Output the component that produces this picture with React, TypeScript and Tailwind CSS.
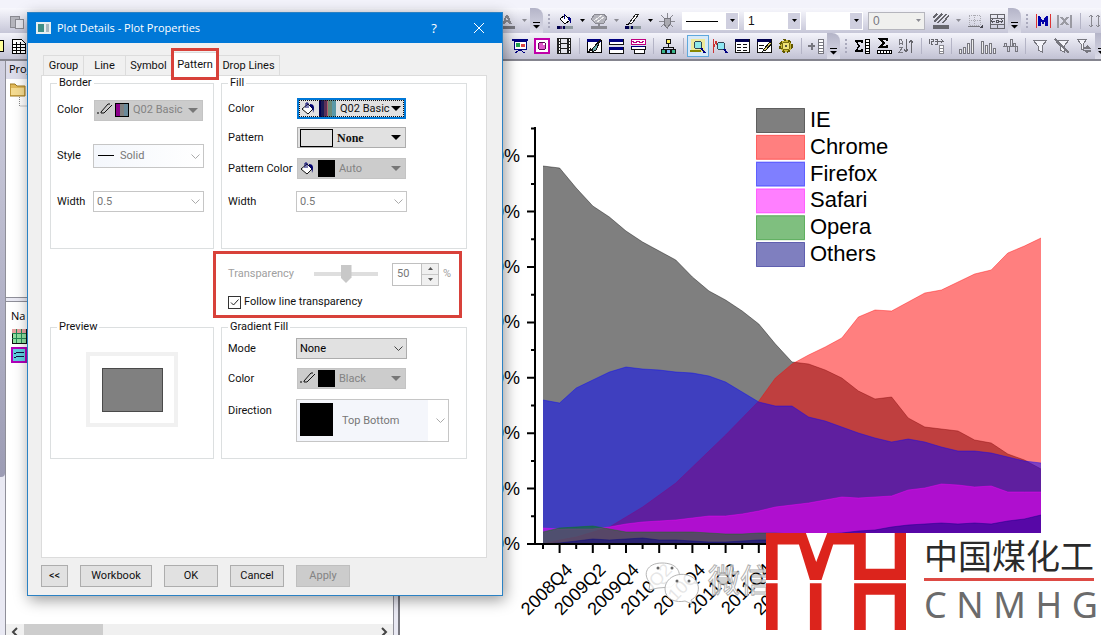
import React from 'react';
import clsx from 'clsx';

// ---------- toolbar icons (16x16) ----------

const funnel = <path d="M1 2h14l-5 6v6l-4-2V8z" fill="#f4f4fa" stroke="#77777f" />;

const ICONS: Record<string, React.ReactNode> = {
  fontColor: (
    <>
      <path d="M3 11L7 2h2l4 9h-3l-1-2H7l-1 2zM7 7h2L8 4z" fill="#8a8a92" />
      <path d="M0 13h16v3H0z" fill="#77777f" />
    </>
  ),
  bucket: (
    <>
      <path d="M3 6l5-4 5 5-5 4z" fill="#fff" stroke="#000" />
      <path d="M7 6V1" stroke="#00007f" />
      <path d="M11 4c3 0 4 2 3 7-1-2-1-4-3-5z" fill="#00007f" />
      <path d="M0 13h16v3H0z" fill="#8f9a9f" />
      <path d="M0 13h3v3H0zM6 13h2v3H6z" fill="#00004f" />
      <path d="M3 13h2v3H3z" fill="#553377" />
    </>
  ),
  shape: (
    <>
      <path d="M4 1h9l3 4-3 5H4L0 6z" fill="#b5b5bd" stroke="#8a8a92" />
      <path d="M3 8l8-6M6 9l7-5" stroke="#eee" />
      <path d="M7 10h2v3H7z" fill="#8a8a92" />
      <path d="M0 13h16v3H0z" fill="#8a8a92" />
    </>
  ),
  pencil: (
    <>
      <path d="M4 10l7-9h3l-7 9z" fill="#fff" stroke="#222" />
      <path d="M1 11h3" stroke="#000" />
      <path d="M0 13h16v3H0z" fill="#8f9a9f" />
      <path d="M0 13h4v3H0zM6 13h2v3H6z" fill="#00004f" />
    </>
  ),
  bulb: (
    <>
      <path d="M8 0v16M0 8h16M2 2l12 12M14 2L2 14" stroke="#8a8a92" />
      <path d="M5 5h6v6l-2 3H7l-2-3z" fill="#a9a9b0" stroke="#77777f" />
    </>
  ),
  hatch: (
    <>
      <path d="M0 5l4-4M1 9l8-8M5 10l8-9M10 10l6-8" stroke="#66666d" strokeWidth="1.5" />
      <path d="M0 12h16v4H0z" fill="#66666d" />
    </>
  ),
  borders: (
    <>
      <path d="M2 2h11v10H2zM7 2v10M2 7h11" fill="none" stroke="#aaaab2" strokeDasharray="1 1" />
      <path d="M1 13h12" stroke="#77777f" />
      <path d="M16 11v4h-4z" fill="#44444c" />
    </>
  ),
  merge: (
    <>
      <path d="M1 1h14v14H1zM1 5h14M1 11h14M8 1v4M8 11v4" fill="none" stroke="#66666d" />
      <path d="M2 8h4M10 8h4M4 6L2 8l2 2M12 6l2 2-2 2M7 7h2v2H7z" fill="none" stroke="#55555d" />
    </>
  ),
  mask: (
    <>
      <path d="M1 1v14M15 1v14" stroke="#d33" />
      <path d="M3 13V3h2l3 5 3-5h2v10h-3V8l-2 4-2-4v5z" fill="#0000a8" />
    </>
  ),
  unmask: <path d="M1 2v13M14 2v13M4 4l7 8M11 4l-7 8" stroke="#9a9aa2" strokeWidth="2" />,
  updown: <path d="M4 2v12M2 4l2-2 2 2M2 12l2 2 2-2M11 2v12M9 4l2-2 2 2M9 12l2 2 2-2" fill="none" stroke="#8a8a92" />,
  board: (
    <>
      <path d="M0 2h16" stroke="#00007f" strokeWidth="2" />
      <path d="M2 3h12v8H2z" fill="#fff" stroke="#00007f" />
      <circle cx="6" cy="7" r="2.5" fill="#1fa34a" />
      <path d="M9 6h4v3H9z" fill="#d44" />
      <path d="M8 11v2M3 15l5-3 5 3" fill="none" stroke="#00007f" />
    </>
  ),
  circleBox: (
    <>
      <path d="M1 1h14v14H1z" fill="#fff" stroke="#c000a8" strokeWidth="2" />
      <circle cx="8" cy="8" r="4" fill="#e05acb" stroke="#5f0055" />
      <circle cx="10" cy="6" r="1.5" fill="#fff" />
    </>
  ),
  film: (
    <>
      <path d="M1 0h14v16H1z" fill="#222" />
      <path d="M5 1h6v4H5zM5 6h6v4H5zM5 11h6v4H5z" fill="#e5e5ec" />
      <path d="M3 1v15M13 1v15" stroke="#fff" strokeDasharray="2 1" />
    </>
  ),
  brush: (
    <>
      <path d="M1 2h14v12H1z" fill="#fff" stroke="#000" />
      <path d="M1 1h14v3H1z" fill="#00007f" />
      <path d="M15 1l-8 9-1 4 4-2z" fill="#6aa" stroke="#111" />
      <path d="M2 14l6-2-4-2z" fill="#111" />
    </>
  ),
  panes: (
    <>
      <path d="M1 1h14v5H1zM1 9h14v6H1z" fill="#fff" stroke="#111" />
      <path d="M1 1h14v3H1zM1 9h14v3H1z" fill="#00007f" />
    </>
  ),
  panes2: (
    <>
      <path d="M1 1h14v5H1z" fill="#fff" stroke="#c0007f" />
      <path d="M2 3l3 2 3-2 3 2 3-2" fill="none" stroke="#c0007f" />
      <path d="M1 8h14v3H1zM4 11h10v4H4z" fill="#fff" stroke="#111" />
      <path d="M1 8h14v1H1z" fill="#00007f" />
    </>
  ),
  tree: (
    <>
      <path d="M8 5v4M3 12V9h10v3" fill="none" stroke="#111" />
      <path d="M6 1h4v4H6z" fill="#ffef5a" stroke="#111" />
      <path d="M1 11h4v4H1zM11 11h4v4h-4z" fill="#39b58a" stroke="#111" />
      <path d="M6 11h4v4H6z" fill="#7fc0ff" stroke="#111" />
    </>
  ),
  zoomImg: (
    <>
      <path d="M1 1h14v13H1z" fill="#eee99a" />
      <path d="M0 13h11" stroke="#888800" strokeWidth="2" />
      <circle cx="8" cy="7" r="4" fill="#8fe8e8" stroke="#345" />
      <path d="M11 10l4 5" stroke="#00007f" strokeWidth="2" />
    </>
  ),
  zoomGraph: (
    <>
      <path d="M1 1v14M1 12l3-9 2 8 2-7" fill="none" stroke="#c33" />
      <circle cx="9" cy="8" r="4" fill="#8fe8f4" stroke="#345" />
      <path d="M12 11l3 4" stroke="#00007f" strokeWidth="2" />
    </>
  ),
  sheet: (
    <>
      <path d="M1 1h14v13H1z" fill="#fff" stroke="#111" />
      <path d="M1 1h14v3H1z" fill="#00004f" />
      <path d="M3 6h4M9 6h4M3 9h4M9 9h4M3 12h4M9 12h4" stroke="#111" />
    </>
  ),
  note: (
    <>
      <path d="M1 1h14v13H1z" fill="#fff" stroke="#111" />
      <path d="M1 1h14v3H1z" fill="#00004f" />
      <path d="M3 7h5M3 10h4" stroke="#111" />
      <path d="M14 4l-6 7-1 2 3-1 6-7z" fill="#e0d060" stroke="#111" />
    </>
  ),
  gear: (
    <>
      <circle cx="8" cy="8" r="6" fill="#c9b93c" stroke="#5f5500" strokeWidth="2" strokeDasharray="3 2" />
      <circle cx="8" cy="8" r="4" fill="#efe27a" stroke="#7a6d10" />
      <circle cx="8" cy="8" r="1.5" fill="#554" />
    </>
  ),
  addCol: (
    <>
      <path d="M0 8h7M4 5v7" stroke="#77777f" strokeWidth="2" />
      <path d="M10 1h5v14h-5zM10 4h5M10 7h5M10 10h5M10 13h5" fill="#fff" stroke="#77777f" />
    </>
  ),
  sumCol: (
    <>
      <path d="M8 5V3H2l3 5-3 5h6v-2" fill="none" stroke="#000" strokeWidth="1.5" />
      <path d="M11 1h4v14h-4zM11 4h4M11 7h4M11 10h4M11 13h4" fill="#fff" stroke="#000" />
    </>
  ),
  sumRow: (
    <>
      <path d="M11 3V1H4l4 4-4 4h7V7" fill="none" stroke="#000" strokeWidth="1.5" />
      <path d="M1 12h14v3H1zM4 12v3M7 12v3M10 12v3M13 12v3" fill="#fff" stroke="#000" />
    </>
  ),
  sort: (
    <>
      <path d="M1 7V3l1-2h1l1 2v4M1 5h3M1 9h4l-4 5h4" fill="none" stroke="#77777f" />
      <path d="M8 1v13M6 11l2 3 2-3M13 15V2M11 5l2-3 2 3" fill="none" stroke="#66666d" />
    </>
  ),
  numbers: (
    <>
      <path d="M1 1v5M3 1h2v2H3v3h2M7 1h2v5H7M7 3h2M10 3h5l-2-2M13 5l2-2" fill="none" stroke="#66666d" />
      <path d="M11 7h4v8h-4zM11 10h4M11 13h4" fill="#fff" stroke="#88888f" />
    </>
  ),
  bars: <path d="M1 15v-4h2v4zM5 15V9h2v6zM9 15V5h2v10zM13 15V1h2v14z" fill="#eee" stroke="#77777f" />,
  bars2: <path d="M1 15V3h2v12zM5 15V7h2v8zM9 15V5h2v10zM13 15v-5h2v5z" fill="#eee" stroke="#77777f" />,
  hist: <path d="M1 8h14M2 8V5h2v3M5 8v5h2V8M8 8V1h2v7M11 8V5h2v8h2V8" fill="none" stroke="#77777f" />,
  filter: funnel,
  filterOff: (
    <>
      {funnel}
      <path d="M1 1l14 14" stroke="#77777f" strokeWidth="2" />
    </>
  ),
  filterRedo: (
    <>
      <path d="M1 1h10l-4 5v6l-2-1V6z" fill="#f4f4fa" stroke="#77777f" />
      <path d="M8 10h5l-2-2M15 13h-5l2 2" fill="none" stroke="#77777f" strokeWidth="2" />
    </>
  ),
  paste: (
    <>
      <path d="M2 3h9v11H2z" fill="#b5b5bd" stroke="#8a8a92" />
      <path d="M7 6h8v9H7z" fill="#e5e5ec" stroke="#8a8a92" />
    </>
  ),
  grid: (
    <>
      <path d="M2 1h9l4 4v10H2z" fill="#fff" stroke="#000" />
      <path d="M2 6h13M2 9h13M2 12h13M6 4v11M10 4v11" stroke="#000" />
    </>
  ),
};

const Icon = ({ name }: { name: string }) => (
  <svg width="16" height="16" viewBox="0 0 16 16" shapeRendering="crispEdges" aria-hidden="true">
    {ICONS[name]}
  </svg>
);

const ToolButton = ({ name, active }: { name: string; active?: boolean }) => (
  <button
    aria-label={name}
    className={clsx(
      'flex h-[22px] w-[22px] shrink-0 items-center justify-center',
      active && 'border border-[#5fa8dc] bg-[#d6e9f8]'
    )}
  >
    <Icon name={name} />
  </button>
);

const Caret = ({ dim }: { dim?: boolean }) => (
  <button aria-label="More" className="flex w-3 shrink-0 items-center justify-center">
    <svg width="5" height="3" viewBox="0 0 5 3">
      <path d="M0 0h5L2.5 3z" fill={dim ? '#8a8a92' : '#000'} />
    </svg>
  </button>
);

const Sep = () => (
  <span className="flex w-2 shrink-0 justify-center">
    <span className="h-4 w-px bg-[#b4b4c6]" />
  </span>
);

// end of one toolbar and the grip of the next
const Fold = () => (
  <>
    <span className="flex w-[13px] shrink-0 items-end justify-center self-stretch rounded-tr-lg bg-linear-to-b from-[#b4b4c8] to-[#dcdce8] pb-1">
      <svg width="7" height="7" viewBox="0 0 7 7">
        <path d="M0 0h7v1H0zM0 3h7L3.5 6.5z" fill="#000" />
      </svg>
    </span>
    <span className="flex w-[11px] shrink-0 flex-col items-center gap-0.5">
      {[0, 1, 2, 3].map((i) => (
        <span key={i} className="size-0.5 bg-[#a9a9bc]" />
      ))}
    </span>
  </>
);

const ToolSelect = ({ value, dim, line }: { value: string; dim?: boolean; line?: boolean }) => (
  <span className="relative mr-[5px] block w-[57px] shrink-0">
    <select
      aria-label="Line option"
      disabled={dim}
      className={clsx(
        'block h-[18px] w-full appearance-none pl-1 font-[Liberation_Sans] text-xs leading-4',
        dim ? 'border border-[#b5b5bd] bg-[#f0f0ee] text-[#77777f]' : 'bg-white text-[#111]'
      )}
    >
      <option>{value}</option>
    </select>
    {line && <span className="absolute top-[9px] left-1 h-px w-8 bg-black" />}
    <span
      className={clsx(
        'pointer-events-none absolute top-px right-px flex h-4 w-3 items-center justify-center',
        !dim && 'bg-[#cfcfdf]'
      )}
    >
      <svg width="5" height="3" viewBox="0 0 5 3">
        <path d="M0 0h5L2.5 3z" fill={dim ? '#8a8a92' : '#000'} />
      </svg>
    </span>
  </span>
);

const Toolbars = () => (
  <header className="overflow-hidden border-b-2 border-[#85858f] bg-[#d5d5e4]">
    <div className="h-2 bg-[#f3f3fb]" />
    <div className="flex h-[25px] items-center bg-linear-to-b from-[#f8f8fd] to-[#c6c6d8]">
      <div className="flex w-[496px] shrink-0 gap-1 pl-2">
        <Icon name="paste" />
      </div>
      <ToolButton name="fontColor" />
      <Caret dim />
      <Fold />
      <ToolButton name="bucket" />
      <Caret />
      <ToolButton name="shape" />
      <Caret dim />
      <ToolButton name="pencil" />
      <Caret />
      <ToolButton name="bulb" />
      <span className="w-1 shrink-0" />
      <ToolSelect value="" line />
      <ToolSelect value="1" />
      <ToolSelect value="" />
      <ToolSelect value="0" dim />
      <ToolButton name="hatch" />
      <Caret dim />
      <ToolButton name="borders" />
      <ToolButton name="merge" />
      <Fold />
      <ToolButton name="mask" />
      <ToolButton name="unmask" />
      <Sep />
      <ToolButton name="updown" />
    </div>
    <div className="flex h-[26px] items-center bg-linear-to-b from-[#f4f4fb] to-[#c2c2d4]">
      <div className="flex w-[509px] shrink-0 items-center gap-1.5">
        <span className="h-3 w-1 border border-l-0 border-black bg-[#ffff9a]" />
        <Icon name="grid" />
      </div>
      <ToolButton name="board" />
      <ToolButton name="circleBox" />
      <ToolButton name="film" />
      <Sep />
      <ToolButton name="brush" />
      <ToolButton name="panes" />
      <ToolButton name="panes2" />
      <Sep />
      <ToolButton name="tree" />
      <Sep />
      <ToolButton name="zoomImg" active />
      <ToolButton name="zoomGraph" />
      <ToolButton name="sheet" />
      <ToolButton name="note" />
      <ToolButton name="gear" />
      <Sep />
      <ToolButton name="addCol" />
      <Fold />
      <ToolButton name="sumCol" />
      <ToolButton name="sumRow" />
      <ToolButton name="sort" />
      <Sep />
      <ToolButton name="numbers" />
      <Sep />
      <ToolButton name="bars" />
      <ToolButton name="bars2" />
      <ToolButton name="hist" />
      <Sep />
      <ToolButton name="filter" />
      <ToolButton name="filterOff" />
      <ToolButton name="filterRedo" />
      <Fold />
    </div>
  </header>
);

// ---------- project explorer ----------

const Explorer = () => (
  <aside className="flex w-[400px] shrink-0 border-r-2 border-[#77777f] bg-[#e9e9f3] text-xs">
    <div className="flex w-[5px] shrink-0 flex-col">
      <div className="h-[416px] rounded-br bg-linear-to-b from-[#d0d0e0] to-[#9c9cb4]" />
    </div>
    <div className="flex min-w-0 flex-1 flex-col border-x border-[#8f8f99] bg-white">
      <h2 className="h-[18px] bg-[#dcdcea] pl-[3px] font-[Open_Sans] text-[11px] leading-4">Pro_</h2>
      <div className="h-[219px] border-b border-[#8f8f99] pt-0.5 pl-1">
        <svg width="18" height="28" viewBox="0 0 18 28">
          <path d="M0 3h5l2 2h8v10H0z" fill="#e0b95a" stroke="#a07a20" />
          <path d="M1 7h13v7H1z" fill="#f5dc92" />
          <path d="M9.5 16v9H18" fill="none" stroke="#888" strokeDasharray="1 1" />
        </svg>
      </div>
      <div className="h-1 border-b border-[#8f8f99] bg-[#e9e9f3]" />
      <div className="flex-1 pt-1.5 pl-[5px]">
        <span className="block font-[Open_Sans] text-[11px] leading-4">Na</span>
        <svg width="16" height="38" viewBox="0 0 16 38" shapeRendering="crispEdges" className="mt-1">
          <path d="M1 1h14v14H1z" fill="#8fe0a0" stroke="#111" />
          <path d="M1 1h14v4H1z" fill="#e8a0a0" />
          <path d="M1 5h14M1 10h14M5 1v14M10 1v14" stroke="#285" />
          <path d="M1 20h14v14H1z" fill="#5fd0e0" stroke="#b000b8" strokeWidth="2" />
          <path d="M3 26l4-2 6 1M3 30l4-2 6 1" fill="none" stroke="#114" />
        </svg>
      </div>
      <div className="flex h-[11px] items-center overflow-hidden bg-[#f0f0f0]">
        <svg width="18" height="11" viewBox="0 0 18 11">
          <path d="M11 4L7 8l4 4" fill="none" stroke="#444" strokeWidth="2" />
        </svg>
        <span className="h-full w-[79px] bg-[#cdcdcd]" />
        <svg width="16" height="11" viewBox="0 0 16 11" className="ml-auto">
          <path d="M5 4l4 4-4 4" fill="none" stroke="#444" strokeWidth="2" />
        </svg>
      </div>
    </div>
    <div className="w-1 shrink-0" />
  </aside>
);

// ---------- graph ----------

const X0 = 543;
const STEP = 16.6;
const BASE = 544;

const SERIES = [
  {
    name: 'IE', color: '#000000',
    y: [166, 168, 188, 206, 217, 231, 242, 251, 260, 277, 291, 300, 311, 324, 344, 362, 364, 370, 378, 391, 399, 397, 418, 427, 429, 431, 440, 443, 454, 460, 469],
  },
  {
    name: 'Chrome', color: '#ff0000',
    y: [544, 540, 537, 532, 527, 517, 507, 495, 483, 467, 451, 435, 418, 401, 378, 364, 355, 347, 338, 317, 310, 311, 302, 293, 290, 282, 274, 270, 253, 246, 238],
  },
  {
    name: 'Firefox', color: '#0000ff',
    y: [400, 403, 388, 380, 372, 367, 369, 370, 372, 373, 376, 382, 392, 402, 406, 406, 417, 421, 427, 433, 438, 442, 439, 442, 447, 451, 451, 453, 457, 461, 463],
  },
  {
    name: 'Safari', color: '#ff00ff',
    y: [528, 529, 529, 529, 527, 524, 522, 521, 520, 518, 516, 516, 514, 511, 507, 505, 503, 500, 497, 498, 497, 496, 490, 488, 484, 485, 487, 486, 492, 492, 492],
  },
  {
    name: 'Opera', color: '#008000',
    y: [532, 528, 527, 526, 529, 532, 532, 532, 532, 532, 533, 534, 534, 533, 533, 534, 535, 535, 536, 536, 536, 536, 536, 536, 536, 537, 537, 537, 537, 537, 537],
  },
  {
    name: 'Others', color: '#000080',
    y: [544, 543, 541, 539, 540, 539, 538, 540, 540, 541, 542, 542, 541, 540, 540, 538, 536, 534, 533, 531, 530, 527, 525, 524, 523, 524, 523, 524, 521, 519, 515],
  },
];

const QUARTERS = ['2008Q4', '2009Q2', '2009Q4', '2010Q2', '2010Q4', '2011Q2', '2011Q4', '2012Q2'];

const linePoints = (ys: number[]) => ys.map((y, i) => `${(X0 + i * STEP).toFixed(1)},${y}`).join(' ');

const Graph = () => (
  <main className="min-w-0 flex-1 overflow-hidden bg-white">
    <svg width="701" height="574" viewBox="400 61 701 574" fontFamily="Liberation Sans, sans-serif">
      {SERIES.map((s) => (
        <g key={s.name}>
          <polygon
            points={`${X0},${BASE} ${linePoints(s.y)} ${X0 + 30 * STEP},${BASE}`}
            fill={s.color}
            fillOpacity="0.5"
          />
          <polyline points={linePoints(s.y)} fill="none" stroke={s.color} strokeOpacity="0.4" />
        </g>
      ))}

      <path d={`M535 127V545M534 ${BASE}H1041`} stroke="#000" strokeWidth="2" fill="none" />
      {[0, 1, 2, 3, 4, 5, 6, 7].map((i) => {
        const y = BASE - i * 55.4;
        return (
          <g key={i}>
            <path d={`M527 ${y}h8M531 ${y - 27.7}h4`} stroke="#000" strokeWidth="2" />
            <text x="520" y={y + 6} fontSize="18" textAnchor="end">{i * 10}%</text>
          </g>
        );
      })}
      {QUARTERS.map((q, i) => {
        const x = X0 + STEP + i * STEP * 2;
        return (
          <g key={q}>
            <path d={`M${x - STEP} 544v5M${x} 544v9`} stroke="#000" strokeWidth="2" />
            <text fontSize="18" textAnchor="end" transform={`translate(${x + 14} 571) rotate(-45)`}>{q}</text>
          </g>
        );
      })}

      {SERIES.map((s, i) => (
        <g key={s.name}>
          <rect
            x="756.5"
            y={108.5 + i * 26.8}
            width="48"
            height="24"
            fill={s.color}
            fillOpacity="0.5"
            stroke={s.color}
            strokeOpacity="0.5"
          />
          <text x="810" y={127 + i * 26.8} fontSize="22">{s.name}</text>
        </g>
      ))}

      {/* wechat mark */}
      <g stroke="#b5b5b5" fill="#fff" fillOpacity="0.9">
        <path d="M649 590l1-7c-8-9-3-20 12-20 14 0 19 8 17 16l-8 8-13 1z" />
        <path d="M691 600c10-5 10-19-1-24-12-5-25 2-25 13s12 14 20 12l7 3z" />
      </g>
      <g fill="#666">
        <circle cx="658" cy="568" r="1.5" />
        <circle cx="672" cy="568" r="1.5" />
        <circle cx="677" cy="581" r="1.5" />
        <circle cx="689" cy="581" r="1.5" />
      </g>
      <text
        x="708"
        y="592"
        fontSize="32"
        fontFamily="Noto Sans CJK SC, sans-serif"
        fill="#fff"
        fillOpacity="0.7"
        stroke="#b0b0b0"
      >
        微信
      </text>
    </svg>
  </main>
);

const Brand = () => (
  <div className="absolute right-0 bottom-0 flex h-[102px] w-[335px] gap-[18px] bg-white">
    <svg width="140" height="97" viewBox="48 158 421 291" className="shrink-0" aria-label="YH">
      <path
        fill="#dc241c"
        d="M48 158H168L199 245L232 158H348V265H435V158H469V299H313V192H250L215 299H180L147 192H83V299H48zM48 309H83V449H48zM180 309H215V449H180zM313 309H469V449H435V343H348V449H313z"
      />
    </svg>
    <div className="flex w-[174px] flex-col">
      <span className="pt-1 font-[Noto_Sans_CJK_SC] text-[34px] leading-9 whitespace-nowrap text-[#2b2b2b]">
        中国煤化工
      </span>
      <span className="mt-[5px] h-[3px] w-[170px] bg-[#dd4a44]" />
      <span className="mt-1.5 flex justify-between font-[Noto_Sans] text-[36px] leading-9 text-[#6b6b6b]">
        {['C', 'N', 'M', 'H', 'G'].map((c) => (
          <span key={c}>{c}</span>
        ))}
      </span>
    </div>
  </div>
);

// ---------- dialog ----------

const Group = ({ title, className, children }: { title: string; className?: string; children: React.ReactNode }) => (
  <fieldset className={clsx('min-w-0 border border-[#dcdfe0] px-1.5', className)}>
    <legend className="h-3.5 px-0.5 leading-3.5">{title}</legend>
    {children}
  </fieldset>
);

interface ComboProps {
  id: string;
  value: string;
  disabled?: boolean;
  className?: string;
  preview?: React.ReactNode;
}

const Combo = ({ id, value, disabled, className, preview }: ComboProps) => (
  <span className="relative block shrink-0">
    <select
      id={id}
      disabled={disabled}
      className={clsx(
        'block appearance-none border',
        disabled ? 'border-[#c6c6c6] bg-white text-[#777]' : 'border-[#adadad] bg-[#e1e1e1] text-black',
        className ?? 'h-[21px] w-[111px] pl-[3px]'
      )}
    >
      <option>{value}</option>
    </select>
    {preview}
    <svg
      width="9"
      height="5"
      viewBox="0 0 9 5"
      className="pointer-events-none absolute inset-y-0 right-1 my-auto"
    >
      <path d="M0.5 0.5l4 4 4-4" fill="none" stroke={disabled ? '#aaa' : '#444'} />
    </svg>
  </span>
);

interface ColorButtonProps {
  id: string;
  icon?: 'line' | 'fill';
  swatch: string;
  value: string;
  disabled?: boolean;
  focused?: boolean;
  serif?: boolean;
}

const ColorButton = ({ id, icon, swatch, value, disabled, focused, serif }: ColorButtonProps) => (
  <button
    id={id}
    disabled={disabled}
    className={clsx(
      'ml-px flex h-[21px] w-[109px] shrink-0 items-center pl-0.5',
      disabled && 'border border-[#c4c4c4] bg-[#ccc] pr-1 text-[#838383]',
      !disabled && !focused && 'border border-[#adadad] bg-[#e1e1e1] pr-1',
      focused && 'border-2 border-[#0078d7] bg-[#e1e1e1] pr-[3px] outline-1 -outline-offset-3 outline-dotted'
    )}
  >
    {icon === 'line' && (
      <svg width="18" height="14" viewBox="0 0 18 14" className="shrink-0">
        <path d="M4 9l7-8M7 10l8-8M4 9v1h3M11 1h2" fill="none" stroke="#111" />
        <path d="M0 10h2" stroke="#000" />
      </svg>
    )}
    {icon === 'fill' && (
      <svg width="18" height="14" viewBox="0 0 18 14" className="shrink-0">
        <path d="M1 7l6-5 5 5-5 5z" fill="#fff" stroke="#111" />
        <path d="M5 6V1h2v5" fill="none" stroke="#00006f" />
        <path d="M9 2c4 0 5 3 3 9 0-4-1-6-3-7z" fill="#00006f" />
      </svg>
    )}
    <span className={clsx('shrink-0', swatch)} />
    <span className={clsx('ml-1 whitespace-nowrap', serif && 'font-[Liberation_Serif] text-xs font-bold')}>
      {value}
    </span>
    <svg width="10" height="5" viewBox="0 0 10 5" className="ml-auto shrink-0">
      <path d="M0 0h10L5 5z" fill={disabled ? '#777' : '#000'} />
    </svg>
  </button>
);

const STRIPES =
  'h-[17px] w-[17px] bg-[linear-gradient(90deg,#1a1a55_0_20%,#5a3058_20%_40%,#b0606a_40%_50%,#6a8a78_50%_75%,#5a98a8_75%)] border-l-2 border-[#00004f]';
const STRIPES_DIM =
  'h-[14px] w-[14px] bg-[linear-gradient(90deg,#8a008a_0_33%,#808080_33%_66%,#6a8a9a_66%)] border border-black';
const BLACK = 'h-[17px] w-[17px] bg-black';

interface RowProps {
  label: string;
  id: string;
  wide?: boolean;
  className?: string;
  children: React.ReactNode;
}

const Row = ({ label, id, wide, className, children }: RowProps) => (
  <div className={clsx('flex', className ?? 'items-center')}>
    <label htmlFor={id} className={clsx('shrink-0 whitespace-nowrap', wide ? 'w-[68px]' : 'w-9')}>
      {label}
    </label>
    {children}
  </div>
);

const TABS = [
  { name: 'Group', width: 'w-[41px]' },
  { name: 'Line', width: 'w-[42px]' },
  { name: 'Symbol', width: 'w-[46px]' },
  { name: 'Pattern', width: 'w-[46px]' },
  { name: 'Drop Lines', width: 'w-[62px]' },
];

interface DialogButtonProps {
  children: React.ReactNode;
  className: string;
  disabled?: boolean;
}

const DialogButton = ({ children, className, disabled }: DialogButtonProps) => (
  <button
    disabled={disabled}
    className={clsx(
      'h-[22px] border text-center',
      disabled ? 'border-[#bfbfbf] bg-[#ccc] text-[#838383]' : 'border-[#adadad] bg-[#e1e1e1]',
      className
    )}
  >
    {children}
  </button>
);

const PlotDetails = () => (
  <section
    role="dialog"
    aria-label="Plot Details"
    className="absolute top-3 left-[27px] flex h-[584px] w-[476px] flex-col border border-[#2b82c4] bg-[#f0f0f0] font-[Roboto,sans-serif] text-[11px] leading-4 text-[#111] shadow-[2px_4px_14px_rgba(0,0,0,0.4)]"
  >
    <header className="flex h-[30px] shrink-0 items-center bg-[#0078d7] pl-2 text-white">
      <svg width="15" height="12" viewBox="0 0 15 12">
        <path d="M0 0h15v12H0z" fill="#e8eef0" />
        <path d="M2 2h6v8H2z" fill="#3f8f86" />
        <path d="M10 2h3v8h-3z" fill="#a8b8c0" />
      </svg>
      <h1 className="ml-1.5 font-[Open_Sans] text-[11px]">Plot Details - Plot Properties</h1>
      <button aria-label="Help" className="ml-auto w-11 font-[Open_Sans] text-[13px]">?</button>
      <button aria-label="Close" className="flex w-[46px] items-center justify-center">
        <svg width="10" height="10" viewBox="0 0 10 10">
          <path d="M0 0l10 10M10 0L0 10" stroke="#fff" />
        </svg>
      </button>
    </header>

    <div className="flex flex-1 flex-col pr-[15px] pb-2 pl-[13px]">
      <div role="tablist" className="flex h-8 shrink-0 items-end pl-0.5">
        {TABS.map((tab) =>
          tab.name === 'Pattern' ? (
            <div key={tab.name} className={clsx('relative z-10 -mb-px h-6', tab.width)}>
              <button role="tab" aria-selected="true" className="h-full w-full border border-b-0 border-[#dcdcdc] bg-white">
                {tab.name}
              </button>
              <span className="pointer-events-none absolute -inset-x-px -top-1 -bottom-1 border-3 border-[#d8413a]" />
            </div>
          ) : (
            <button
              key={tab.name}
              role="tab"
              className={clsx('h-5 border border-b-0 border-l-0 border-[#dcdcdc] whitespace-nowrap first:border-l', tab.width)}
            >
              {tab.name}
            </button>
          )
        )}
      </div>

      <div className="flex-1 border border-[#dcdcdc] bg-white pl-2">
        <div className="grid grid-cols-[164px_246px] gap-x-[7px] gap-y-0.5">
          <Group title="Border" className="h-[173px] pt-2">
            <Row label="Color" id="border-color" className="h-6 items-center">
              <ColorButton id="border-color" icon="line" swatch={STRIPES_DIM} value="Q02 Basic" disabled />
            </Row>
            <Row label="Style" id="border-style" className="mt-[22px] h-6 items-center">
              <Combo
                id="border-style"
                value="Solid"
                disabled
                className="h-6 w-[111px] bg-linear-to-r from-[#f4f7fc] to-white pl-[26px]"
                preview={<span className="absolute top-[11px] left-[5px] h-px w-4 bg-black" />}
              />
            </Row>
            <Row label="Width" id="border-width" className="mt-[23px] items-center">
              <Combo id="border-width" value="0.5" disabled />
            </Row>
          </Group>

          <Group title="Fill" className="h-[173px] pt-2">
            <Row label="Color" id="fill-color" wide>
              <ColorButton id="fill-color" icon="fill" swatch={STRIPES} value="Q02 Basic" focused />
            </Row>
            <Row label="Pattern" id="fill-pattern" wide className="mt-2 items-center">
              <ColorButton id="fill-pattern" swatch="h-[18px] w-[33px] border border-black" value="None" serif />
            </Row>
            <Row label="Pattern Color" id="fill-pattern-color" wide className="mt-2.5 items-center">
              <ColorButton id="fill-pattern-color" icon="fill" swatch={BLACK} value="Auto" disabled />
            </Row>
            <Row label="Width" id="fill-width" wide className="mt-3 items-center">
              <Combo id="fill-width" value="0.5" disabled />
            </Row>
          </Group>

          <div className="col-start-2 mr-[5px] -ml-2 h-[67px] border-3 border-[#d8413a] pt-2 pl-3">
            <div className="flex h-6 items-center text-[#a0a0a0]">
              <label htmlFor="transparency" className="w-[86px]">Transparency</label>
              <input
                id="transparency"
                type="range"
                disabled
                defaultValue={50}
                className="h-5 w-16 appearance-none bg-[linear-gradient(#dedede,#dedede)] bg-[length:100%_4px] bg-center bg-no-repeat [&::-webkit-slider-thumb]:h-[18px] [&::-webkit-slider-thumb]:w-[11px] [&::-webkit-slider-thumb]:appearance-none [&::-webkit-slider-thumb]:bg-[#c8c8c8] [&::-webkit-slider-thumb]:[clip-path:polygon(0_0,100%_0,100%_70%,50%_100%,0_70%)]"
              />
              <div className="ml-3.5 flex h-[23px] w-[47px] border border-[#c0c0c0]">
                <input aria-label="Transparency percent" disabled defaultValue="50" className="w-7 min-w-0 pl-1 text-[#777]" />
                <div className="flex flex-1 flex-col border-l border-[#c0c0c0] bg-[#f0f0f0]">
                  <button aria-label="Increase" disabled className="flex flex-1 items-center justify-center border-b border-[#c8c8c8]">
                    <svg width="5" height="3" viewBox="0 0 5 3">
                      <path d="M0 3h5L2.5 0z" fill="#555" />
                    </svg>
                  </button>
                  <button aria-label="Decrease" disabled className="flex flex-1 items-center justify-center">
                    <svg width="5" height="3" viewBox="0 0 5 3">
                      <path d="M0 0h5L2.5 3z" fill="#555" />
                    </svg>
                  </button>
                </div>
              </div>
              <span className="ml-1">%</span>
            </div>
            <label className="mt-2 flex items-center gap-[3px]">
              <span className="relative block size-[13px]">
                <input type="checkbox" defaultChecked className="block size-[13px] appearance-none border border-[#333] bg-white" />
                <svg width="13" height="13" viewBox="0 0 13 13" className="pointer-events-none absolute inset-0">
                  <path d="M3 6.5l2.5 2.5 5-5.5" fill="none" stroke="#222" />
                </svg>
              </span>
              Follow line transparency
            </label>
          </div>

          <Group title="Preview" className="col-start-1 h-[139px] pt-[18px]">
            <div className="mx-auto flex h-[75px] w-[92px] items-center justify-center border-4 border-[#f1f1f1]">
              <span className="h-11 w-[61px] border border-[#4a4a4a] bg-[#808080]" />
            </div>
          </Group>

          <Group title="Gradient Fill" className="h-[139px] pt-1">
            <Row label="Mode" id="gradient-mode" wide>
              <Combo id="gradient-mode" value="None" />
            </Row>
            <Row label="Color" id="gradient-color" wide className="mt-[9px] items-center">
              <ColorButton id="gradient-color" icon="line" swatch={BLACK} value="Black" disabled />
            </Row>
            <Row label="Direction" id="gradient-direction" wide className="mt-2.5 items-start leading-6">
              <Combo
                id="gradient-direction"
                value="Top Bottom"
                disabled
                className="h-[43px] w-[153px] bg-[linear-gradient(90deg,#f4f6fb_87%,#fff_87%)] pl-[45px]"
                preview={<span className="absolute top-1 left-1 h-[33px] w-[33px] bg-black" />}
              />
            </Row>
          </Group>
        </div>
      </div>

      <footer className="mt-[7px] flex gap-3">
        <DialogButton className="w-[27px]">&lt;&lt;</DialogButton>
        <DialogButton className="w-[72px]">Workbook</DialogButton>
        <DialogButton className="w-[54px]">OK</DialogButton>
        <DialogButton className="w-[54px]">Cancel</DialogButton>
        <DialogButton className="w-[54px]" disabled>Apply</DialogButton>
      </footer>
    </div>
  </section>
);

const App = () => (
  <div className="relative flex min-h-screen flex-col overflow-hidden bg-white text-black">
    <Toolbars />
    <div className="flex flex-1">
      <Explorer />
      <Graph />
    </div>
    <Brand />
    <PlotDetails />
  </div>
);

export default App;
